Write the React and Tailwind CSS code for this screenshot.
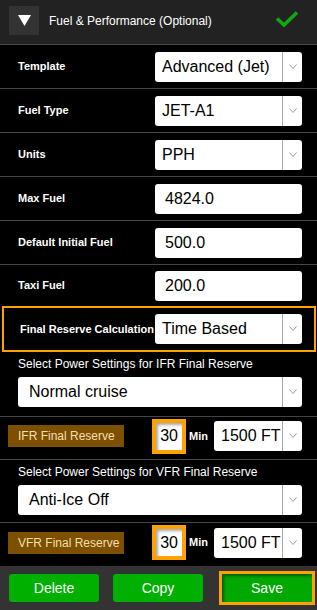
const font = { fontFamily: '"Liberation Sans", Arial, sans-serif' };

function Chevron() {
  return (
    <svg width="8" height="5" viewBox="0 0 8 5">
      <path d="M0.5 0.5 L4 4.5 L7.5 0.5" stroke="#9a9a9a" strokeWidth="1" fill="none" />
    </svg>
  );
}

function Select({ value, className = "", pad = "pl-[7px]" }) {
  return (
    <div className={"flex h-[30px] items-stretch rounded-[3px] bg-white " + className}>
      <span className={"flex flex-1 items-center overflow-hidden whitespace-nowrap text-[16px] text-black " + pad}>
        {value}
      </span>
      <span className="flex w-[20px] justify-center border-l border-[#a8a8a8] pt-[12px]">
        <Chevron />
      </span>
    </div>
  );
}

function NumInput({ value }) {
  return (
    <div className="flex h-[30px] w-[147px] items-center rounded-[3px] bg-white pl-[10px] text-[16px] text-black">
      {value}
    </div>
  );
}

function Row({ label, children, last }) {
  return (
    <div
      className={
        last
          ? "flex h-[41px] items-center justify-between pl-[18px] pr-[15px]"
          : "flex h-[44px] items-center justify-between border-b border-[#444] pl-[18px] pr-[15px]"
      }
    >
      <span className="text-[11px] font-bold text-white">{label}</span>
      {children}
    </div>
  );
}

function ReserveRow({ label, minutes, alt, border }) {
  return (
    <div
      className={
        border
          ? "flex h-[43px] items-center justify-between border-b border-[#444] pb-[4px] pl-[8px] pr-[15px]"
          : "flex h-[43px] items-center justify-between pb-[4px] pl-[8px] pr-[15px]"
      }
    >
      <span className="flex h-[22px] w-[116px] items-center bg-[#7d5000] pl-[10px] text-[12px] text-[#f6dfae]">
        {label}
      </span>
      <div className="flex items-center">
        <div className="flex h-[35px] w-[34px] items-center justify-center border-[4px] border-[#ffa200] bg-white text-[16px] text-black shadow-[inset_2px_2px_3px_rgba(0,0,0,0.35)]">
          {minutes}
        </div>
        <span className="ml-[3px] text-[11px] font-bold text-white">Min</span>
        <Select value={alt} className="ml-[6px] w-[88px]" />
      </div>
    </div>
  );
}

function PowerBlock({ title, value, h }) {
  return (
    <div className={"flex flex-col gap-[6px] border-b border-[#444] pl-[18px] pr-[15px] pt-[5px] " + h}>
      <span className="text-[12px] leading-[14px] text-white">{title}</span>
      <Select value={value} pad="pl-[11px]" />
    </div>
  );
}

export default function App() {
  return (
    <div className="h-[610px] w-[317px] overflow-hidden bg-black" style={font}>
      {/* header */}
      <div className="flex h-[45px] items-start border-b border-[#444] bg-[#222]">
        <div className="ml-[9px] mt-[6px] flex h-[29px] w-[30px] items-center justify-center bg-[#333]">
          <svg width="13" height="11" viewBox="0 0 13 11">
            <path d="M0 0 L13 0 L6.5 11 Z" fill="#fff" />
          </svg>
        </div>
        <span className="ml-[10px] mt-[14px] text-[12px] leading-[14px] text-white">
          Fuel &amp; Performance (Optional)
        </span>
        <svg className="ml-auto mr-[18px] mt-[10px]" width="24" height="18" viewBox="0 0 24 18">
          <path d="M2 8.5 L9 15 L22 2.5" stroke="#10a810" strokeWidth="3.6" fill="none" />
        </svg>
      </div>

      <Row label="Template">
        <Select value="Advanced (Jet)" className="w-[147px]" />
      </Row>
      <Row label="Fuel Type">
        <Select value="JET-A1" className="w-[147px]" />
      </Row>
      <Row label="Units">
        <Select value="PPH" className="w-[147px]" />
      </Row>
      <Row label="Max Fuel">
        <NumInput value="4824.0" />
      </Row>
      <Row label="Default Initial Fuel">
        <NumInput value="500.0" />
      </Row>
      <Row label="Taxi Fuel" last>
        <NumInput value="200.0" />
      </Row>

      {/* highlighted row */}
      <div className="ml-[2px] mr-[1px] flex h-[46px] items-center justify-between border-2 border-[#ffa200] pl-[16px] pr-[12px]">
        <span className="text-[11px] font-bold text-white">Final Reserve Calculation</span>
        <Select value="Time Based" className="w-[147px]" />
      </div>

      <PowerBlock title="Select Power Settings for IFR Final Reserve" value="Normal cruise" h="h-[65px]" />
      <ReserveRow label="IFR Final Reserve" minutes="30" alt="1500 FT" border />
      <PowerBlock title="Select Power Settings for VFR Final Reserve" value="Anti-Ice Off" h="h-[63px]" />
      <ReserveRow label="VFR Final Reserve" minutes="30" alt="1500 FT" />

      {/* footer */}
      <div className="flex h-[44px] items-center bg-[#333] pl-[9px]">
        <button className="h-[28px] w-[90px] rounded-[3px] bg-[#00b000] text-[14px] text-white">Delete</button>
        <button className="ml-[14px] h-[28px] w-[90px] rounded-[3px] bg-[#00b000] text-[14px] text-white">Copy</button>
        <button className="ml-[16px] h-[34px] w-[96px] border-[3px] border-[#ffa200] bg-[#00a800] text-[14px] text-white shadow-[inset_2px_2px_3px_rgba(0,0,0,0.45)]">
          Save
        </button>
      </div>
    </div>
  );
}
